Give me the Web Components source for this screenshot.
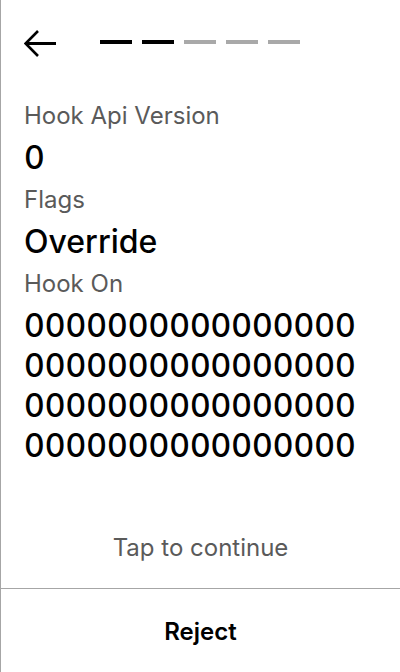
<!DOCTYPE html>
<html lang="en"><head><meta charset="utf-8"><meta name="viewport" content="width=device-width"><title>Review transaction</title>
<style>html,body{margin:0;height:100%}body{background:#fff;color:#000;font-family:Inter,sans-serif}</style></head>
<body>
<review-screen>
<nav-header slot="header" total="5" current="2"></nav-header>
<field-item label="Hook Api Version">0</field-item>
<field-item label="Flags">Override</field-item>
<field-item label="Hook On">0000000000000000000000000000000000000000000000000000000000000000</field-item>
<tap-hint slot="hint">Tap to continue</tap-hint>
<reject-action slot="footer">Reject</reject-action>
</review-screen>
<script>
const define=(name,html,setup)=>customElements.define(name,class extends HTMLElement{
connectedCallback(){if(this.shadowRoot)return;const r=this.attachShadow({mode:'open'});r.innerHTML=html;if(setup)setup(this,r);}});
define('review-screen',`<style>
:host{display:flex;flex-direction:column;min-height:100vh;box-sizing:border-box;border-left:1px solid #a6a6a6}
main{flex:1;padding:16px 32px 0 23px}
</style><slot name="header"></slot><main><slot></slot></main><slot name="hint"></slot><slot name="footer"></slot>`);
define('nav-header',`<style>
:host{display:flex;align-items:center;height:84px;padding:0 100px 0 23px;gap:44px}
button{display:block;border:0;padding:0;background:none;color:inherit;width:32px;height:32px}
svg{display:block}
ol{display:flex;gap:10px;flex:1;list-style:none;margin:0;padding:0}
li{flex:1;height:4px;background:#a9a9a9}li.done{background:#000}
</style><button aria-label="Back"><svg width="32" height="32" viewBox="0 0 32 32" fill="none" stroke="currentColor"><path stroke-width="3" d="M32 17.5H2"/><path stroke-width="2.6" d="M14 5L1.6 17.5L14 30"/></svg></button><ol></ol>`,(h,r)=>{
const o=r.querySelector('ol');for(let i=0;i<+h.getAttribute('total');i++){const l=document.createElement('li');if(i<+h.getAttribute('current'))l.className='done';o.append(l);}});
define('field-item',`<style>
:host{display:block}
dl{margin:0}
dt{font-size:24px;line-height:32px;color:#5a5a5a}
dd{margin:0;padding:6px 0;font-size:32px;font-weight:500;line-height:40px;font-variant-numeric:tabular-nums;overflow-wrap:anywhere}
</style><dl><dt></dt><dd><slot></slot></dd></dl>`,(h,r)=>r.querySelector('dt').textContent=h.getAttribute('label'));
define('tap-hint',`<style>:host{display:block;text-align:center;font-size:24px;line-height:32px;padding:24px 0;color:#5a5a5a}</style><slot></slot>`);
define('reject-action',`<style>:host{display:block;border-top:1px solid #a6a6a6}button{display:block;width:100%;height:83px;padding:2px 0 0;border:0;background:none;color:inherit;font:600 24px/32px Inter,sans-serif}</style><button><slot></slot></button>`);
</script></body></html>
